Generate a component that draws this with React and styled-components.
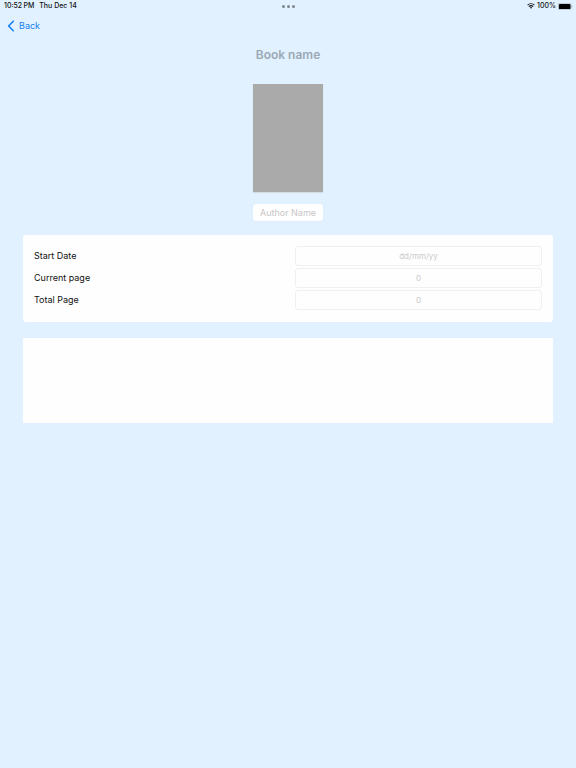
import React, { useState } from "react";
import styled, { createGlobalStyle } from "styled-components";

const App = () => {
  const [book, setBook] = useState({
    name: "",
    author: "",
    startDate: "",
    currentPage: "",
    totalPage: "",
    notes: "",
  });

  const handleChange = (e) => {
    setBook({ ...book, [e.target.name]: e.target.value });
  };

  return (
    <>
      <GlobalStyle />
      <StyledStatusBar>
        <StyledStatusGroup>
          <span>10:52{"\u2009"}PM</span>
          <span>Thu Dec 14</span>
        </StyledStatusGroup>
        <StyledDots>
          <i />
          <i />
          <i />
        </StyledDots>
        <StyledStatusRight>
          <WifiIcon />
          <span>100%</span>
          <BatteryIcon />
        </StyledStatusRight>
      </StyledStatusBar>
      <StyledNav>
        <StyledBack href="#">
          <svg width="8" height="12" viewBox="0 0 8 12" fill="none">
            <path
              d="M6.3 1.2 1.6 6l4.7 4.8"
              stroke="currentColor"
              strokeWidth="1.6"
              strokeLinecap="round"
              strokeLinejoin="round"
            />
          </svg>
          Back
        </StyledBack>
      </StyledNav>
      <StyledForm>
        <StyledTitleInput
          name="name"
          aria-label="Book name"
          placeholder="Book name"
          value={book.name}
          onChange={handleChange}
        />
        <StyledCover />
        <StyledAuthorInput
          name="author"
          aria-label="Author Name"
          placeholder="Author Name"
          value={book.author}
          onChange={handleChange}
        />
        <StyledCard>
          <StyledRow>
            <StyledLabel htmlFor="startDate">Start Date</StyledLabel>
            <StyledInput
              id="startDate"
              name="startDate"
              placeholder="dd/mm/yy"
              value={book.startDate}
              onChange={handleChange}
            />
          </StyledRow>
          <StyledRow>
            <StyledLabel htmlFor="currentPage">Current page</StyledLabel>
            <StyledInput
              id="currentPage"
              name="currentPage"
              placeholder="0"
              value={book.currentPage}
              onChange={handleChange}
            />
          </StyledRow>
          <StyledRow>
            <StyledLabel htmlFor="totalPage">Total Page</StyledLabel>
            <StyledInput
              id="totalPage"
              name="totalPage"
              placeholder="0"
              value={book.totalPage}
              onChange={handleChange}
            />
          </StyledRow>
        </StyledCard>
        <StyledNotes
          name="notes"
          aria-label="Notes"
          value={book.notes}
          onChange={handleChange}
        />
      </StyledForm>
    </>
  );
};

const WifiIcon = () => (
  <svg width="8" height="6" viewBox="0 0 16 12" fill="none">
    <path
      d="M1.2 4.4a9.8 9.8 0 0 1 13.6 0M3.8 7.2a6 6 0 0 1 8.4 0"
      stroke="#111"
      strokeWidth="2.1"
    />
    <path d="M5.7 9.2a3.3 3.3 0 0 1 4.6 0L8 11.6z" fill="#111" />
  </svg>
);

const BatteryIcon = () => (
  <svg width="15" height="7" viewBox="0 0 15 7" fill="none">
    <rect x="0.25" y="0.25" width="12.9" height="6.5" rx="1.8" stroke="#8a949c" strokeWidth="0.5" />
    <rect x="0.9" y="0.9" width="11.6" height="5.2" rx="1.2" fill="#000" />
    <path d="M13.8 2.4c.8.3.8 1.9 0 2.2z" fill="#8a949c" />
  </svg>
);

const GlobalStyle = createGlobalStyle`
  * {
    box-sizing: border-box;
  }
  body {
    margin: 0;
    background: #e1f1ff;
    color: #111;
    font-family: Inter, "Liberation Sans", sans-serif;
  }
  input, textarea {
    font-family: inherit;
    outline: none;
  }
`;

const StyledStatusBar = styled.header`
  display: grid;
  grid-template-columns: 1fr auto 1fr;
  align-items: center;
  height: 12px;
  padding: 0 3px 0 4px;
  font-size: 7px;
  font-weight: 500;
  line-height: 12px;
`;

const StyledStatusGroup = styled.div`
  display: flex;
  gap: 5px;
`;

const StyledStatusRight = styled(StyledStatusGroup)`
  align-items: center;
  justify-content: flex-end;
  gap: 2px;
`;

const StyledDots = styled.div`
  display: flex;
  gap: 2px;

  i {
    width: 3px;
    height: 3px;
    border-radius: 50%;
    background: #7d8790;
  }
`;

const StyledNav = styled.nav`
  display: flex;
  align-items: center;
  height: 28px;
  padding: 0 7px;
`;

const StyledBack = styled.a`
  display: flex;
  align-items: center;
  gap: 4px;
  color: #1681f5;
  font-size: 9px;
  line-height: 12px;
  text-decoration: none;
`;

const StyledForm = styled.form`
  display: flex;
  flex-direction: column;
  align-items: center;
  padding: 4px 23px;
`;

const StyledTitleInput = styled.input`
  width: 100%;
  height: 20px;
  padding: 0;
  border: none;
  background: transparent;
  font-size: 12px;
  font-weight: 600;
  text-align: center;

  &::placeholder {
    color: #9ba9b5;
    opacity: 1;
  }
`;

const StyledCover = styled.div`
  width: 70px;
  height: 108px;
  margin-top: 20px;
  background: #aaa;
  box-shadow: 0 1px 1px #d3dce2;
`;

const StyledAuthorInput = styled.input`
  width: 70px;
  height: 17px;
  margin-top: 12px;
  padding: 0;
  border: none;
  border-radius: 3px;
  background: #fff;
  box-shadow: 0 0 1px #cfdce8;
  font-size: 9px;
  text-align: center;

  &::placeholder {
    color: #c8c5c7;
    opacity: 1;
  }
`;

const StyledCard = styled.section`
  display: flex;
  flex-direction: column;
  gap: 2px;
  width: 100%;
  margin-top: 14px;
  padding: 11px 11px 12px;
  border-radius: 3px;
  background: #fefefe;
`;

const StyledRow = styled.div`
  display: grid;
  grid-template-columns: 1fr 1fr;
  align-items: center;
  gap: 14px;
`;

const StyledLabel = styled.label`
  font-size: 9px;
  line-height: 20px;
`;

const StyledInput = styled.input`
  width: 100%;
  height: 20px;
  padding: 0;
  border: 1px solid #f0f0f2;
  border-radius: 3px;
  background: #fefefe;
  font-size: 8px;
  text-align: center;

  &::placeholder {
    color: #c9c9cb;
    opacity: 1;
  }
`;

const StyledNotes = styled.textarea`
  width: 100%;
  height: 85px;
  margin-top: 16px;
  padding: 11px;
  border: none;
  border-radius: 1px;
  background: #fefefe;
  font-size: 9px;
  resize: none;
`;

export default App;
